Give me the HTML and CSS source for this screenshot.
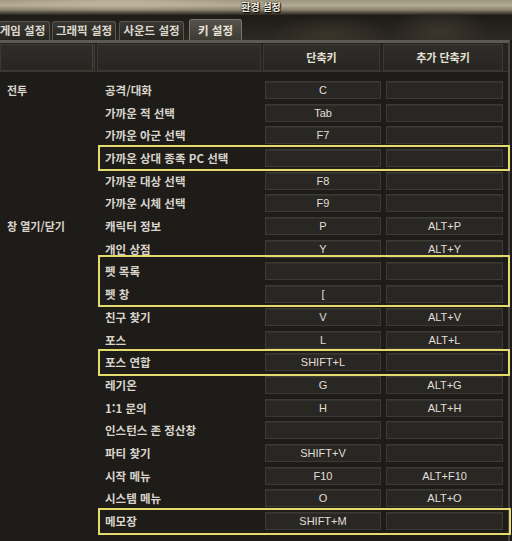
FILE: index.html
```html
<!DOCTYPE html>
<html lang="ko">
<head>
<meta charset="utf-8">
<title>환경 설정</title>
<link rel="stylesheet" href="styles.css">
</head>
<body>
<div class="window">
  <div class="titlebar"><span class="title">환경 설정</span></div>
  <div class="tabbar">
    <div class="tab t1">게임 설정</div>
    <div class="tab t2">그래픽 설정</div>
    <div class="tab t3">사운드 설정</div>
    <div class="tab t4 active">키 설정</div>
  </div>
  <div class="panel">
    <div class="header">
      <div class="hcell h1"></div>
      <div class="hcell h2"></div>
      <div class="hcell h3">단축키</div>
      <div class="hcell h4">추가 단축키</div>
    </div>
    <div class="rows">
      <div class="row"><span class="cat">전투</span><span class="label">공격/대화</span><span class="key">C</span><span class="key alt"></span></div>
      <div class="row"><span class="cat"></span><span class="label">가까운 적 선택</span><span class="key">Tab</span><span class="key alt"></span></div>
      <div class="row"><span class="cat"></span><span class="label">가까운 아군 선택</span><span class="key">F7</span><span class="key alt"></span></div>
      <div class="hl hl-a">
        <div class="row"><span class="cat"></span><span class="label">가까운 상대 종족 PC 선택</span><span class="key"></span><span class="key alt"></span></div>
      </div>
      <div class="row"><span class="cat"></span><span class="label">가까운 대상 선택</span><span class="key">F8</span><span class="key alt"></span></div>
      <div class="row"><span class="cat"></span><span class="label">가까운 시체 선택</span><span class="key">F9</span><span class="key alt"></span></div>
      <div class="row"><span class="cat">창 열기/닫기</span><span class="label">캐릭터 정보</span><span class="key">P</span><span class="key alt">ALT+P</span></div>
      <div class="row"><span class="cat"></span><span class="label">개인 상점</span><span class="key">Y</span><span class="key alt">ALT+Y</span></div>
      <div class="hl hl-b">
        <div class="row"><span class="cat"></span><span class="label">펫 목록</span><span class="key"></span><span class="key alt"></span></div>
        <div class="row"><span class="cat"></span><span class="label">펫 창</span><span class="key">[</span><span class="key alt"></span></div>
      </div>
      <div class="row"><span class="cat"></span><span class="label">친구 찾기</span><span class="key">V</span><span class="key alt">ALT+V</span></div>
      <div class="row"><span class="cat"></span><span class="label">포스</span><span class="key">L</span><span class="key alt">ALT+L</span></div>
      <div class="hl hl-c">
        <div class="row"><span class="cat"></span><span class="label">포스 연합</span><span class="key">SHIFT+L</span><span class="key alt"></span></div>
      </div>
      <div class="row"><span class="cat"></span><span class="label">레기온</span><span class="key">G</span><span class="key alt">ALT+G</span></div>
      <div class="row"><span class="cat"></span><span class="label">1:1 문의</span><span class="key">H</span><span class="key alt">ALT+H</span></div>
      <div class="row"><span class="cat"></span><span class="label">인스턴스 존 정산창</span><span class="key"></span><span class="key alt"></span></div>
      <div class="row"><span class="cat"></span><span class="label">파티 찾기</span><span class="key">SHIFT+V</span><span class="key alt"></span></div>
      <div class="row"><span class="cat"></span><span class="label">시작 메뉴</span><span class="key">F10</span><span class="key alt">ALT+F10</span></div>
      <div class="row"><span class="cat"></span><span class="label">시스템 메뉴</span><span class="key">O</span><span class="key alt">ALT+O</span></div>
      <div class="hl hl-d">
        <div class="row"><span class="cat"></span><span class="label">메모장</span><span class="key">SHIFT+M</span><span class="key alt"></span></div>
      </div>
    </div>
  </div>
</div>
</body>
</html>
```

FILE: styles.css
```css
html, body {
  margin: 0;
  padding: 0;
  background: #1e1c19;
}

.window {
  width: 512px;
  height: 541px;
  overflow: hidden;
  background: #1e1c19;
  font-family: "Noto Sans CJK KR", "Noto Sans", sans-serif;
  color: #d9d5cc;
}

.titlebar {
  height: 15px;
  display: flex;
  justify-content: center;
  align-items: flex-start;
  background:
    radial-gradient(ellipse 140px 10px at 120px 2px, rgba(210,200,175,0.5), rgba(0,0,0,0) 100%),
    linear-gradient(to bottom, #9c957f 0, #b3ab93 35%, #8c8571 65%, #4a443a 88%, #2a2620 100%);
}

.title {
  font-size: 10px;
  font-weight: 700;
  line-height: 14px;
  color: #f4f0e6;
  text-shadow: 0 0 2px #000, 1px 1px 1px #000;
  padding-left: 10px;
}

.tabbar {
  height: 25px;
  display: flex;
  align-items: flex-end;
  background:
    radial-gradient(ellipse 60px 20px at 330px 20px, rgba(80,70,55,0.45), rgba(0,0,0,0)),
    radial-gradient(ellipse 50px 22px at 440px 15px, rgba(90,80,65,0.4), rgba(0,0,0,0)),
    linear-gradient(to bottom, #1f1c18, #2c2823);
}

.tab {
  box-sizing: border-box;
  height: 19px;
  border: 1px solid #5a5750;
  border-bottom: none;
  border-radius: 3px 3px 0 0;
  background: linear-gradient(to bottom, #3a3833, #27251f);
  font-size: 11.5px;
  font-weight: 700;
  line-height: 17px;
  text-align: center;
  color: #dcd8ce;
  white-space: nowrap;
  overflow: hidden;
}

.t1 { width: 51px; margin-left: -1px; text-indent: -4px; }
.t2 { width: 64px; margin-left: 2px; }
.t3 { width: 65px; margin-left: 3px; }
.t4 { width: 53px; margin-left: 5px; }

.tab.active {
  height: 21px;
  line-height: 20px;
  border-color: #7a766d;
  background: linear-gradient(to bottom, #55524b, #3e3b35);
  color: #e8e4da;
}

.panel {
  border-top: 3px solid #5d5a53;
  border-right: 2px solid #48453f;
  margin-right: 2px;
  height: 498px;
}

.header {
  display: grid;
  grid-template-columns: 95px 166px 119px 123px;
  height: 27px;
  padding-top: 1px;
  background: #25231f;
  border-bottom: 1px solid #3a3732;
}

.hcell {
  box-sizing: border-box;
  border: 1px solid #3b3934;
  background: linear-gradient(to bottom, #2f2d29, #282622);
  font-size: 11px;
  font-weight: 700;
  line-height: 25px;
  text-align: center;
  color: #e6e2d8;
}

.h1 { border-right: 3px double #45423c; }
.h2 { margin-left: 2px; }
.h3 { margin-left: 2px; }
.h4 { margin-left: 3px; }

.rows {
  padding-top: 6.6px;
}

.row {
  display: grid;
  grid-template-columns: 97px 168px 116px 122px;
  align-items: center;
  height: 22.7px;
}

.cat {
  padding-left: 7px;
  font-size: 11px;
  font-weight: 700;
  white-space: nowrap;
}

.label {
  padding-left: 8px;
  font-size: 11.5px;
  font-weight: 700;
  white-space: nowrap;
}

.key {
  box-sizing: border-box;
  height: 18px;
  border: 1px solid #3c3a35;
  background: #292724;
  font-family: "Liberation Sans", Arial, sans-serif;
  font-size: 11px;
  line-height: 16px;
  text-align: center;
  color: #e2dfd9;
  box-shadow: inset 0 1px 0 #33312d;
}

.key.alt {
  margin-left: 5px;
}

.hl {
  position: relative;
}

.hl::after {
  content: "";
  position: absolute;
  left: 98px;
  right: -2px;
  top: -2px;
  bottom: -2px;
  border: 2px solid #e5da6c;
  pointer-events: none;
}

.hl-b::after { top: -5px; bottom: -2px; }
.hl-d::after { bottom: -3px; right: -3px; }
```
